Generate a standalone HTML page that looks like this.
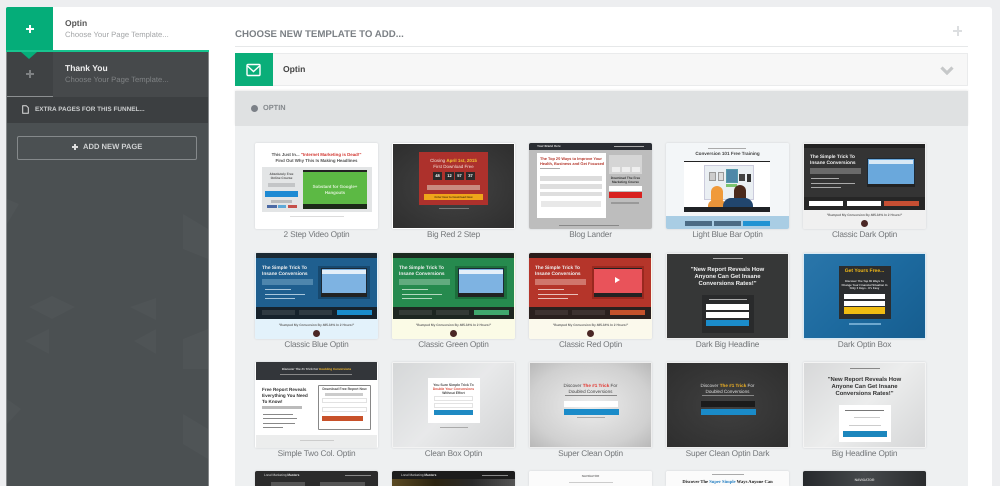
<!DOCTYPE html>
<html><head><meta charset="utf-8"><title>Choose Template</title>
<style>
*{box-sizing:border-box}
html,body{margin:0;padding:0;width:1000px;height:486px;overflow:hidden;background:#edeef0;font-family:"Liberation Sans",sans-serif;text-rendering:geometricPrecision}
div,span.a{position:absolute}
.c{left:0;right:0;text-align:center;white-space:nowrap;line-height:1.15}
.card{width:123px;height:86px;background:#fff;overflow:hidden;border-radius:2px;box-shadow:0 0 2px rgba(0,0,0,.12)}
.in{left:0;top:0;width:123px;height:86px;filter:blur(.25px)}
.lab{width:137px;text-align:center;font-size:8.3px;letter-spacing:-.2px;color:#75787b;white-space:nowrap;line-height:11px}
.l{white-space:nowrap;line-height:1.15}
b{font-weight:bold}
.bar{height:1px;background:#999}
</style></head><body>

<!-- main white panel -->
<div style="left:6px;top:7px;width:986px;height:479px;background:#fff;border-radius:3px 3px 0 0"></div>

<!-- sidebar -->
<div style="left:6px;top:51px;width:203px;height:435px;background:#4b5052;border-left:1px solid #85888a;border-right:1px solid #85888a"></div>
<svg style="position:absolute;left:7px;top:124px;display:block" width="201" height="362" viewBox="0 0 201 362">
<g fill="#505557" opacity=".8">
<polygon points="22,183 45,172 45,195"/><polygon points="45,172 68,183 45,195"/>
<polygon points="123,183 149,174 149,196"/><polygon points="18,217 42,205 42,230"/>
<polygon points="127,217 149,205 149,230"/><polygon points="176,215 201,205 201,245 176,245"/>
<polygon points="176,90 201,105 201,135 176,125"/><polygon points="0,75 12,80 0,100"/>
<polygon points="176,290 201,305 201,335 176,320"/><polygon points="0,275 14,285 0,300"/>
</g></svg>
<div style="left:7px;top:52px;width:201px;height:45px;background:#46494b"></div>
<div style="left:7px;top:52px;width:46px;height:45px;background:#3f4244;border-bottom:1px solid #8c8f91"></div>
<div style="left:7px;top:97px;width:201px;height:26px;background:#3c3f41"></div>
<div style="left:6px;top:7px;width:47px;height:44px;background:#05ad79;border-radius:2px 0 0 0"></div>
<div style="left:6px;top:50px;width:203px;height:2px;background:#17c48f"></div>
<div style="left:21px;top:52px;width:0;height:0;border-left:8px solid transparent;border-right:8px solid transparent;border-top:7px solid #05ad79"></div>
<div style="left:26px;top:28px;width:8px;height:2px;background:#fff"></div><div style="left:29px;top:25px;width:2px;height:8px;background:#fff"></div>
<div style="left:26px;top:73px;width:8px;height:2px;background:#7e8183"></div><div style="left:29px;top:70px;width:2px;height:8px;background:#7e8183"></div>

<div class="l" style="left:65px;top:18.5px;font-size:8.5px;font-weight:bold;color:#555">Optin</div>
<div class="l" style="left:65px;top:30.5px;font-size:7.7px;color:#a3a5a7">Choose Your Page Template...</div>
<div class="l" style="left:65px;top:63.5px;font-size:8.5px;font-weight:bold;color:#eee">Thank You</div>
<div class="l" style="left:65px;top:75.5px;font-size:7.7px;color:#7f8284">Choose Your Page Template...</div>

<svg style="position:absolute;left:22px;top:105px" width="7" height="9" viewBox="0 0 7 9"><path d="M.7.7H4.3L6.3 2.7V8.3H.7Z" fill="none" stroke="#ddd" stroke-width="1"/></svg>
<div class="l" style="left:35px;top:106px;font-size:6.4px;font-weight:bold;color:#c9cbcc">EXTRA PAGES FOR THIS FUNNEL...</div>

<div style="left:17px;top:136px;width:180px;height:24px;border:1px solid #85898b;border-radius:2px"></div>
<div style="left:72px;top:146px;width:6px;height:2px;background:#ddd"></div><div style="left:74px;top:144px;width:2px;height:6px;background:#ddd"></div>
<div class="l" style="left:83px;top:143px;font-size:7.6px;font-weight:bold;color:#cfd1d2">ADD NEW PAGE</div>

<!-- header -->
<div class="l" style="left:235px;top:28.5px;font-size:9.7px;font-weight:bold;color:#7b8085">CHOOSE NEW TEMPLATE TO ADD...</div>
<div style="left:953px;top:30px;width:9px;height:2px;background:#dcdee0"></div><div style="left:957px;top:26px;width:2px;height:10px;background:#dcdee0"></div>
<div style="left:235px;top:46px;width:733px;height:1px;background:#e6e8e9"></div>

<div style="left:235px;top:53px;width:733px;height:33px;background:#f7f7f7;border:1px solid #eaebec"></div>
<div style="left:235px;top:53px;width:38px;height:33px;background:#0aae79"></div>
<svg style="position:absolute;left:245px;top:63px" width="18" height="14" viewBox="0 0 18 14"><rect x="2" y="1.5" width="13" height="11" rx="1" fill="none" stroke="#fff" stroke-width="1.4"/><path d="M2.5 3L8.5 8.5 14.5 3" fill="none" stroke="#fff" stroke-width="1.4"/></svg>
<div class="l" style="left:283px;top:64.5px;font-size:8.6px;font-weight:bold;color:#444">Optin</div>
<svg style="position:absolute;left:940px;top:66px" width="14" height="9" viewBox="0 0 14 9"><path d="M1.5 1.5L7 7 12.5 1.5" fill="none" stroke="#c6c8c9" stroke-width="3.2"/></svg>

<div style="left:235px;top:91px;width:733px;height:35px;background:#dfe1e2;box-shadow:0 -1px 2px rgba(0,0,0,.08)"></div>
<div style="left:251px;top:105px;width:7px;height:7px;border-radius:50%;background:#7b8087"></div>
<div class="l" style="left:263px;top:104px;font-size:7.4px;font-weight:bold;color:#84888c">OPTIN</div>
<div style="left:235px;top:126px;width:733px;height:360px;background:#eef0f1"></div>

<!-- ROW 1 -->
<div class="card" style="left:255px;top:143px"><div class="in" style="background:#fff">
<div class="c" style="top:9px;font-size:4.4px;font-weight:bold;color:#555">This Just In... <span style="color:#d33a34">"Internet Marketing is Dead!"</span></div>
<div class="c" style="top:14.5px;font-size:4.4px;font-weight:bold;color:#555">Find Out Why This Is Making Headlines</div>
<div style="left:7px;top:24px;width:110px;height:45px;background:#e3e5e6"></div>
<div class="c" style="left:10px;right:auto;width:33px;top:30px;font-size:3.2px;font-weight:bold;color:#555">Absolutely Free<br>Online Course</div>
<div class="bar" style="left:13px;top:40px;width:27px;background:#c3c5c7;height:4px"></div>
<div style="left:10px;top:48px;width:33px;height:6px;background:#1e8ad3"></div>
<div class="bar" style="left:16px;top:57px;width:21px;background:#b9bbbd;height:3px"></div>
<div style="left:12px;top:62px;width:10px;height:3px;background:#4c6aa5"></div><div style="left:23px;top:62px;width:8px;height:3px;background:#5fa9d8"></div><div style="left:33px;top:62px;width:9px;height:3px;background:#c5504a"></div>
<div style="left:48px;top:27px;width:64px;height:39px;background:#5cb944"></div>
<div style="left:48px;top:27px;width:64px;height:2px;background:#222"></div>
<div style="left:48px;top:61px;width:64px;height:5px;background:#1c2b18"></div>
<div class="c" style="left:48px;right:auto;width:64px;top:41px;font-size:4.4px;font-weight:bold;line-height:6px;color:#d9efcf">Sobstant for Google+<br>Hangouts</div>
<div style="left:35px;top:73px;width:54px;height:1px;background:#dcdcdc"></div>
</div></div>
<div class="lab" style="left:248px;top:229px">2 Step Video Optin</div>

<div class="card" style="left:392px;top:143px"><div class="in" style="background:radial-gradient(ellipse at center,#444 0,#303030 90%);border:1px solid #fff">
<div style="left:26px;top:8px;width:69px;height:53px;background:#ad312c"></div>
<div class="c" style="top:14px;left:26px;right:auto;width:69px;font-size:4.5px;color:#f2dcd3;line-height:6px">Closing <b style="color:#f4c232">April 1st, 2015</b><br>First Download Free</div>
<div style="left:40px;top:28px;width:9px;height:8px;background:#2a2a2a;color:#fff;font-size:4px;font-weight:bold;text-align:center;line-height:8px">48</div>
<div style="left:52px;top:28px;width:9px;height:8px;background:#2a2a2a;color:#fff;font-size:4px;font-weight:bold;text-align:center;line-height:8px">12</div>
<div style="left:62px;top:28px;width:9px;height:8px;background:#2a2a2a;color:#fff;font-size:4px;font-weight:bold;text-align:center;line-height:8px">57</div>
<div style="left:73px;top:28px;width:9px;height:8px;background:#2a2a2a;color:#fff;font-size:4px;font-weight:bold;text-align:center;line-height:8px">37</div>
<div style="left:34px;top:41px;width:53px;height:5px;background:#c98a80"></div>
<div style="left:31px;top:50px;width:59px;height:6px;background:#efa51a"></div>
<div class="c" style="left:31px;right:auto;width:59px;top:51.5px;font-size:2.8px;font-weight:bold;color:#5a3a08">Enter Now to Download Now</div>
<div style="left:46px;top:64px;width:30px;height:1px;background:#777"></div>
</div></div>
<div class="lab" style="left:385px;top:229px">Big Red 2 Step</div>

<div class="card" style="left:529px;top:143px"><div class="in" style="background:#bdbdbd">
<div style="left:0;top:0;width:123px;height:7px;background:#2a2d33"></div>
<div class="l" style="left:8px;top:2px;font-size:3px;font-weight:bold;color:#ddd">Your Brand Here</div>
<div style="left:85px;top:3px;width:30px;height:1px;background:#aaa"></div>
<div style="left:8px;top:10px;width:69px;height:65px;background:#fff"></div>
<div class="l" style="left:11px;top:13px;font-size:3.9px;font-weight:bold;color:#b63a2f;line-height:5px">The Top 20 Ways to Improve Your<br>Health, Business and Get Focused</div>
<div style="left:11px;top:25px;width:20px;height:1px;background:#aaa"></div>
<div style="left:11px;top:33px;width:62px;height:5px;background:#dcdcdc"></div>
<div style="left:11px;top:41px;width:62px;height:5px;background:#dedede"></div>
<div style="left:11px;top:49px;width:62px;height:4px;background:#dedede"></div>
<div style="left:12px;top:58px;width:60px;height:6px;background:#e8e8e8"></div>
<div style="left:80px;top:12px;width:33px;height:19px;background:#d5d5d5"></div>
<div style="left:83px;top:24px;width:8px;height:5px;background:#eee"></div><div style="left:93px;top:24px;width:8px;height:5px;background:#eee"></div><div style="left:103px;top:24px;width:8px;height:5px;background:#eee"></div>
<div class="c" style="left:80px;right:auto;width:33px;top:34px;font-size:3.2px;font-weight:bold;color:#333">Download The Free<br>Marketing Course</div>
<div style="left:80px;top:43px;width:33px;height:5px;background:#fff"></div>
<div style="left:80px;top:49px;width:33px;height:6px;background:#d8211f"></div>
<div style="left:82px;top:59px;width:28px;height:2px;background:#999"></div>
<div style="left:30px;top:82px;width:60px;height:1px;background:#888"></div>
</div></div>
<div class="lab" style="left:522px;top:229px">Blog Lander</div>

<div class="card" style="left:666px;top:143px"><div class="in" style="background:#f3f6f8">
<div style="left:42px;top:5px;width:38px;height:1px;background:#aaa"></div>
<div class="c" style="top:8px;font-size:4.6px;font-weight:bold;color:#444">Conversion 101 Free Training</div>
<div style="left:18px;top:18px;width:86px;height:51px;background:#fff;border-top:1px solid #222"></div>
<div style="left:38px;top:22px;width:50px;height:35px;background:#eaeff3;border:1px solid #ccd"></div>
<div style="left:43px;top:29px;width:7px;height:9px;background:#ccc;border:1px solid #999"></div>
<div style="left:52px;top:29px;width:6px;height:9px;background:#ddd;border:1px solid #999"></div>
<div style="left:60px;top:26px;width:12px;height:14px;background:#4e87a8;border:1px solid #59a"></div>
<div style="left:60px;top:41px;width:11px;height:3px;background:#7cc46f"></div>
<div style="left:73px;top:31px;width:6px;height:7px;background:#444"></div>
<div style="left:81px;top:31px;width:4px;height:8px;background:#333"></div>
<div style="left:45px;top:43px;width:12px;height:16px;background:#f09a3a;border-radius:6px 6px 2px 2px"></div>
<div style="left:42px;top:57px;width:18px;height:8px;background:#e8943a;border-radius:6px 6px 0 0"></div>
<div style="left:68px;top:42px;width:12px;height:15px;background:#4b2a1c;border-radius:6px 6px 2px 2px"></div>
<div style="left:57px;top:55px;width:30px;height:10px;background:#21466e;border-radius:8px 8px 0 0"></div>
<div style="left:18px;top:64px;width:86px;height:5px;background:#1f2226"></div>
<div style="left:0;top:73px;width:123px;height:13px;background:#a9cde4"></div>
<div style="left:19px;top:78px;width:27px;height:5px;background:#4b6b84"></div>
<div style="left:48px;top:78px;width:27px;height:5px;background:#4b6b84"></div>
<div style="left:77px;top:78px;width:27px;height:5px;background:#1f93d3"></div>
</div></div>
<div class="lab" style="left:659px;top:229px">Light Blue Bar Optin</div>

<div class="card" style="left:803px;top:143px"><div class="in" style="background:#f0f0f0">
<div style="left:1px;top:1px;width:121px;height:66px;background:#343434"></div>
<div style="left:1px;top:1px;width:121px;height:4px;background:#222"></div>
<div class="l" style="left:7px;top:12px;font-size:4.8px;font-weight:bold;color:#eee;line-height:5.8px">The Simple Trick To<br>Insane Conversions</div>
<div style="left:7px;top:25px;width:51px;height:6px;background:#6a6a6a"></div>
<div style="left:8px;top:35px;width:28px;height:1px;background:#aaa"></div><div style="left:8px;top:40px;width:44px;height:1px;background:#aaa"></div><div style="left:8px;top:44px;width:30px;height:1px;background:#aaa"></div>
<div style="left:64px;top:15px;width:48px;height:29px;background:#6aa8dc;border:1px solid #1d2a36"></div>
<div style="left:66px;top:17px;width:44px;height:4px;background:#d9e9f5"></div>
<div style="left:64px;top:41px;width:48px;height:3px;background:#222"></div>
<div style="left:1px;top:54px;width:121px;height:13px;background:#262626"></div>
<div style="left:6px;top:58px;width:34px;height:5px;background:#fff"></div>
<div style="left:44px;top:58px;width:34px;height:5px;background:#fff"></div>
<div style="left:81px;top:58px;width:35px;height:5px;background:#c74f33"></div>
<div class="c" style="top:71px;font-size:3.2px;font-weight:bold;color:#666">"Bumped My Conversion By 485.34% In 2 Hours!"</div>
<div style="left:58px;top:77px;width:7px;height:7px;border-radius:50%;background:#4a2725"></div>
</div></div>
<div class="lab" style="left:796px;top:229px">Classic Dark Optin</div>

<!-- ROW 2 -->
<div class="card" style="left:255px;top:253px"><div class="in" style="background:#e3f2fb">
<div style="left:1px;top:0;width:121px;height:66px;background:#1f5f8f"></div>
<div style="left:1px;top:0;width:121px;height:5px;background:#1c2a33"></div>
<div class="l" style="left:7px;top:13px;font-size:4.8px;font-weight:bold;color:#eee;line-height:5.8px">The Simple Trick To<br>Insane Conversions</div>
<div style="left:7px;top:26px;width:51px;height:6px;background:#4e86ad"></div>
<div style="left:10px;top:36px;width:26px;height:1px;background:#a9c7dc"></div><div style="left:10px;top:41px;width:40px;height:1px;background:#a9c7dc"></div><div style="left:10px;top:45px;width:30px;height:1px;background:#a9c7dc"></div>
<div style="left:63px;top:13px;width:52px;height:33px;background:#17496f"></div>
<div style="left:66px;top:15px;width:46px;height:29px;background:#7eb3e2;border:1px solid #1d2a36"></div>
<div style="left:67px;top:17px;width:44px;height:4px;background:#e4eff8"></div>
<div style="left:66px;top:40px;width:46px;height:4px;background:#222"></div>
<div style="left:1px;top:54px;width:121px;height:12px;background:#16222c"></div>
<div style="left:7px;top:57px;width:33px;height:5px;background:#2f3a42"></div>
<div style="left:44px;top:57px;width:33px;height:5px;background:#2f3a42"></div>
<div style="left:82px;top:57px;width:35px;height:5px;background:#1a8ccc"></div>
<div class="c" style="top:71px;font-size:3.2px;font-weight:bold;color:#666">"Bumped My Conversion By 485.34% In 2 Hours!"</div>
<div style="left:58px;top:77px;width:7px;height:7px;border-radius:50%;background:#4a2725"></div>
</div></div>
<div class="lab" style="left:248px;top:339px">Classic Blue Optin</div>

<div class="card" style="left:392px;top:253px"><div class="in" style="background:#fbfbe6">
<div style="left:1px;top:0;width:121px;height:66px;background:#268a4e"></div>
<div style="left:1px;top:0;width:121px;height:5px;background:#1b2a20"></div>
<div class="l" style="left:7px;top:13px;font-size:4.8px;font-weight:bold;color:#eee;line-height:5.8px">The Simple Trick To<br>Insane Conversions</div>
<div style="left:7px;top:26px;width:51px;height:6px;background:#62ab7f"></div>
<div style="left:10px;top:36px;width:26px;height:1px;background:#b4d9c0"></div><div style="left:10px;top:41px;width:40px;height:1px;background:#b4d9c0"></div><div style="left:10px;top:45px;width:30px;height:1px;background:#b4d9c0"></div>
<div style="left:63px;top:13px;width:52px;height:33px;background:#1c6e3c"></div>
<div style="left:66px;top:15px;width:46px;height:29px;background:#7eb3e2;border:1px solid #1d2a36"></div>
<div style="left:67px;top:17px;width:44px;height:4px;background:#e4eff8"></div>
<div style="left:66px;top:40px;width:46px;height:4px;background:#222"></div>
<div style="left:1px;top:54px;width:121px;height:12px;background:#1d2620"></div>
<div style="left:7px;top:57px;width:33px;height:5px;background:#333a35"></div>
<div style="left:44px;top:57px;width:33px;height:5px;background:#333a35"></div>
<div style="left:82px;top:57px;width:35px;height:5px;background:#3fa86d"></div>
<div class="c" style="top:71px;font-size:3.2px;font-weight:bold;color:#666">"Bumped My Conversion By 485.34% In 2 Hours!"</div>
<div style="left:58px;top:77px;width:7px;height:7px;border-radius:50%;background:#4a2725"></div>
</div></div>
<div class="lab" style="left:385px;top:339px">Classic Green Optin</div>

<div class="card" style="left:529px;top:253px"><div class="in" style="background:#fbf9ec">
<div style="left:0;top:0;width:122px;height:66px;background:#b5352a"></div>
<div style="left:0;top:0;width:122px;height:5px;background:#2a1c1a"></div>
<div class="l" style="left:6px;top:13px;font-size:4.8px;font-weight:bold;color:#eee;line-height:5.8px">The Simple Trick To<br>Insane Conversions</div>
<div style="left:6px;top:26px;width:51px;height:6px;background:#d0766c"></div>
<div style="left:9px;top:36px;width:26px;height:1px;background:#e9c0ba"></div><div style="left:9px;top:41px;width:40px;height:1px;background:#e9c0ba"></div><div style="left:9px;top:45px;width:30px;height:1px;background:#e9c0ba"></div>
<div style="left:63px;top:13px;width:52px;height:33px;background:#99281f"></div>
<div style="left:65px;top:15px;width:48px;height:29px;background:#e9535a;border-top:1px solid #222"></div>
<div style="left:86px;top:24px;width:0;height:0;border-left:5px solid #fff;border-top:3.5px solid transparent;border-bottom:3.5px solid transparent"></div>
<div style="left:65px;top:40px;width:48px;height:4px;background:#222"></div>
<div style="left:0;top:54px;width:122px;height:12px;background:#2a201e"></div>
<div style="left:6px;top:57px;width:33px;height:5px;background:#3d3230"></div>
<div style="left:43px;top:57px;width:33px;height:5px;background:#3d3230"></div>
<div style="left:81px;top:57px;width:35px;height:5px;background:#c5522c"></div>
<div class="c" style="top:71px;font-size:3.2px;font-weight:bold;color:#666">"Bumped My Conversion By 485.34% In 2 Hours!"</div>
<div style="left:58px;top:77px;width:7px;height:7px;border-radius:50%;background:#4a2725"></div>
</div></div>
<div class="lab" style="left:522px;top:339px">Classic Red Optin</div>

<div class="card" style="left:666px;top:253px"><div class="in" style="background:#363737;border:1px solid #eee">
<div style="left:46px;top:4px;width:30px;height:1px;background:#aaa"></div>
<div class="c" style="top:13px;font-size:5.9px;font-weight:bold;color:#eee;line-height:7.1px">"New Report Reveals How<br>Anyone Can Get Insane<br>Conversions Rates!"</div>
<div style="left:35px;top:41px;width:52px;height:38px;background:#292a2b"></div>
<div style="left:42px;top:45px;width:38px;height:1px;background:#aaa"></div>
<div style="left:39px;top:50px;width:43px;height:6px;background:#fff"></div>
<div style="left:39px;top:58px;width:43px;height:6px;background:#fff"></div>
<div style="left:39px;top:66px;width:43px;height:6px;background:#1b8ccb"></div>
</div></div>
<div class="lab" style="left:659px;top:339px">Dark Big Headline</div>

<div class="card" style="left:803px;top:253px"><div class="in" style="background:linear-gradient(135deg,#2a76aa,#1d6a9f 50%,#165d8f);border:1px solid #d8eaf5">
<div style="left:35px;top:12px;width:52px;height:53px;background:#2b2d2f"></div>
<div class="c" style="top:15px;font-size:5px;font-weight:bold;color:#eeb718">Get Yours Free...</div>
<div class="c" style="top:26px;font-size:2.8px;font-weight:bold;color:#ddd;line-height:3.5px">Discover The Top 65 Ways To<br>Change Your Financial Situation In<br>Only 3 Days - It's Easy</div>
<div style="left:40px;top:40px;width:41px;height:5px;background:#fff"></div>
<div style="left:40px;top:47px;width:41px;height:5px;background:#fff"></div>
<div style="left:40px;top:53px;width:41px;height:7px;background:#f0bc12"></div>
<div style="left:45px;top:69px;width:32px;height:2px;background:#6ea8cf"></div>
</div></div>
<div class="lab" style="left:796px;top:339px">Dark Optin Box</div>

<!-- ROW 3 -->
<div class="card" style="left:255px;top:362px"><div class="in" style="background:#fff">
<div style="left:1px;top:0;width:121px;height:18px;background:#33363a"></div>
<div class="c" style="top:6px;font-size:3px;font-weight:bold;color:#ddd">Discover The #1 Trick For <span style="color:#edb42f">Doubling Conversions</span></div>
<div style="left:25px;top:12px;width:72px;height:1px;background:#888"></div>
<div class="l" style="left:7px;top:25px;font-size:4.6px;font-weight:bold;color:#333;line-height:6.1px">Free Report Reveals<br>Everything You Need<br>To Know!</div>
<div style="left:7px;top:44px;width:40px;height:3px;background:#bbb"></div>
<div style="left:8px;top:52px;width:30px;height:1px;background:#888"></div><div style="left:8px;top:56px;width:34px;height:1px;background:#888"></div><div style="left:8px;top:61px;width:32px;height:1px;background:#888"></div><div style="left:8px;top:65px;width:20px;height:1px;background:#888"></div>
<div style="left:63px;top:23px;width:53px;height:45px;background:#fff;border:1px solid #888;border-radius:1px"></div>
<div class="c" style="left:63px;right:auto;width:53px;top:26px;font-size:3.4px;font-weight:bold;color:#444">Download Free Report Now</div>
<div style="left:70px;top:31px;width:38px;height:3px;background:#ccc"></div>
<div style="left:67px;top:36px;width:45px;height:5px;border:1px solid #e2e2e2"></div>
<div style="left:67px;top:45px;width:45px;height:5px;border:1px solid #e2e2e2"></div>
<div style="left:67px;top:54px;width:41px;height:5px;background:#c8512a"></div>
<div style="left:1px;top:73px;width:121px;height:13px;background:#eceded"></div>
<div style="left:45px;top:78px;width:34px;height:1px;background:#ccc"></div>
</div></div>
<div class="lab" style="left:248px;top:448px">Simple Two Col. Optin</div>

<div class="card" style="left:392px;top:362px"><div class="in" style="background:linear-gradient(135deg,#d5d7d8,#e8e9ea 50%,#d2d3d4);border:1px solid #f3f3f3">
<div style="left:35px;top:15px;width:52px;height:45px;background:#fff"></div>
<div class="c" style="top:20px;font-size:3.4px;font-weight:bold;color:#444;line-height:4px">You Sure Simple Trick To<br><span style="color:#d94a3b">Double Your Conversions</span><br>Without Effort</div>
<div style="left:41px;top:33px;width:39px;height:5px;border:1px solid #e3e3e3"></div>
<div style="left:41px;top:40px;width:39px;height:5px;border:1px solid #e3e3e3"></div>
<div style="left:41px;top:47px;width:39px;height:5px;background:#1f8ac3"></div>
<div style="left:47px;top:64px;width:28px;height:1px;background:#aaa"></div>
</div></div>
<div class="lab" style="left:385px;top:448px">Clean Box Optin</div>

<div class="card" style="left:529px;top:362px"><div class="in" style="background:radial-gradient(ellipse at center,#ededed 0,#d0d0d0 70%,#b8b8b8 100%);border:1px solid #eee">
<div class="c" style="top:20px;font-size:4.6px;color:#444;line-height:5.6px">Discover <b style="color:#e2332c">The #1 Trick</b> For<br>Doubled Conversions</div>
<div style="left:35px;top:32px;width:52px;height:1px;background:#888"></div>
<div style="left:34px;top:38px;width:54px;height:6px;background:#fff"></div>
<div style="left:34px;top:46px;width:55px;height:6px;background:#1a8bc9"></div>
<div style="left:47px;top:54px;width:28px;height:1px;background:#aaa"></div>
</div></div>
<div class="lab" style="left:522px;top:448px">Super Clean Optin</div>

<div class="card" style="left:666px;top:362px"><div class="in" style="background:radial-gradient(ellipse at center,#404040 0,#2e2e2e 100%);border:1px solid #eee">
<div class="c" style="top:20px;font-size:4.6px;color:#ddd;line-height:5.6px">Discover <b style="color:#f0b224">The #1 Trick</b> For<br>Doubled Conversions</div>
<div style="left:35px;top:32px;width:52px;height:1px;background:#888"></div>
<div style="left:34px;top:38px;width:54px;height:6px;background:#1b1b1b"></div>
<div style="left:34px;top:46px;width:55px;height:6px;background:#1a8bc9"></div>
</div></div>
<div class="lab" style="left:659px;top:448px">Super Clean Optin Dark</div>

<div class="card" style="left:803px;top:362px"><div class="in" style="background:linear-gradient(135deg,#d7d8d9,#eceded 50%,#d5d6d7);border:1px solid #f4f4f4">
<div style="left:46px;top:5px;width:30px;height:1px;background:#888"></div>
<div class="c" style="top:14px;font-size:5.9px;font-weight:bold;color:#333;line-height:7.1px">"New Report Reveals How<br>Anyone Can Get Insane<br>Conversions Rates!"</div>
<div style="left:35px;top:42px;width:52px;height:37px;background:#fff"></div>
<div style="left:41px;top:47px;width:39px;height:1px;background:#777"></div>
<div style="left:50px;top:54px;width:26px;height:1px;background:#ccc"></div>
<div style="left:45px;top:62px;width:32px;height:1px;background:#ccc"></div>
<div style="left:39px;top:68px;width:44px;height:6px;background:#1b86bd"></div>
</div></div>
<div class="lab" style="left:796px;top:448px">Big Headline Optin</div>

<!-- ROW 4 -->
<div class="card" style="left:255px;top:471px;height:15px;border-radius:2px 2px 0 0"><div class="in" style="height:15px;background:#2b2b2b">
<div class="l" style="left:9px;top:3px;font-size:3.2px;color:#ddd">Local Marketing <b>Masters</b></div>
<div style="left:90px;top:4px;width:26px;height:1px;background:#888"></div>
<div style="left:16px;top:11px;width:34px;height:4px;background:#555"></div><div style="left:65px;top:11px;width:45px;height:4px;background:#555"></div>
</div></div>
<div class="card" style="left:392px;top:471px;height:15px;border-radius:2px 2px 0 0"><div class="in" style="height:15px;background:linear-gradient(90deg,#5b4a23,#2c2410 35%,#2a2a2a 65%,#555)">
<div style="left:0;top:0;width:123px;height:8px;background:#1c1c1c"></div>
<div class="l" style="left:9px;top:3px;font-size:3.2px;color:#ddd">Local Marketing <b>Masters</b></div>
<div style="left:90px;top:4px;width:26px;height:1px;background:#888"></div>
</div></div>
<div class="card" style="left:529px;top:471px;height:15px;border-radius:2px 2px 0 0"><div class="in" style="height:15px;background:#fbfbfb">
<div class="c" style="top:4px;font-size:3px;font-weight:bold;color:#777">NAVIGATOR</div>
<div style="left:40px;top:11px;width:44px;height:1px;background:#ccc"></div>
</div></div>
<div class="card" style="left:666px;top:471px;height:15px;border-radius:2px 2px 0 0"><div class="in" style="height:15px;background:#fbfbfb">
<div style="left:46px;top:3px;width:32px;height:1px;background:#aaa"></div>
<div class="c" style="top:8px;font-size:4.6px;font-family:'Liberation Serif',serif;font-weight:bold;color:#222">Discover The <span style="color:#2b83c4">Super Simple</span> Ways Anyone Can</div>
</div></div>
<div class="card" style="left:803px;top:471px;height:15px;border-radius:2px 2px 0 0"><div class="in" style="height:15px;background:linear-gradient(90deg,#26292c,#46494c 50%,#2a2c2e)">
<div class="c" style="top:8px;font-size:3.4px;font-weight:bold;color:#ccc">NAVIGATOR</div>
</div></div>

</body></html>
